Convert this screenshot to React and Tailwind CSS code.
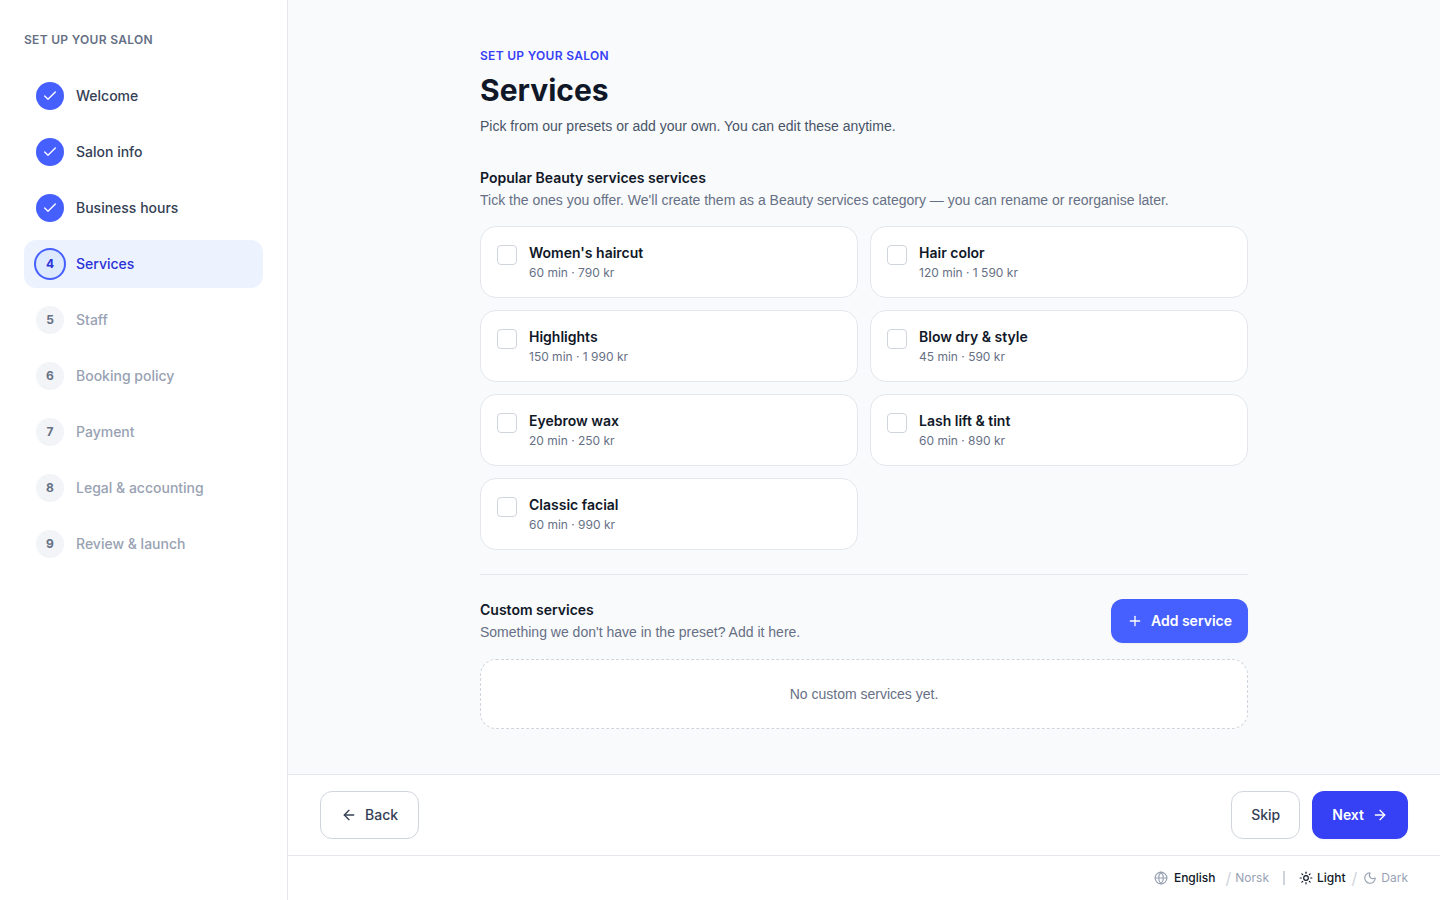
import React, { useState } from "react";
import { ArrowLeft, ArrowRight, Check, Globe, Moon, Plus, Sun } from "lucide-react";

const steps = [
  "Welcome",
  "Salon info",
  "Business hours",
  "Services",
  "Staff",
  "Booking policy",
  "Payment",
  "Legal & accounting",
  "Review & launch",
];

const presets = [
  { id: "womens-haircut", name: "Women's haircut", detail: "60 min · 790 kr" },
  { id: "hair-color", name: "Hair color", detail: "120 min · 1 590 kr" },
  { id: "highlights", name: "Highlights", detail: "150 min · 1 990 kr" },
  { id: "blow-dry", name: "Blow dry & style", detail: "45 min · 590 kr" },
  { id: "eyebrow-wax", name: "Eyebrow wax", detail: "20 min · 250 kr" },
  { id: "lash-lift", name: "Lash lift & tint", detail: "60 min · 890 kr" },
  { id: "classic-facial", name: "Classic facial", detail: "60 min · 990 kr" },
];

// descriptions only, everything else inherits Inter
const bodyText = "font-['Liberation_Sans',Arial,sans-serif] text-sm";

const StepItem = ({ label, number, current }) => {
  const done = number < current;
  const active = number === current;

  let circle = "bg-[#f2f4f7] text-[#667085]";
  let text = "text-[#98a2b3]";
  if (done) {
    circle = "bg-[#465fff] text-white";
    text = "text-[#344054]";
  }
  if (active) {
    circle = "bg-[#dde9ff] text-[#2a31d8] ring-2 ring-[#465fff]";
    text = "text-[#2a31d8]";
  }

  return (
    <li>
      <button
        type="button"
        disabled={!done && !active}
        aria-current={active ? "step" : undefined}
        className={`flex h-12 w-full items-center gap-3 rounded-xl px-3 text-left ${active ? "bg-[#ecf3ff]" : ""}`}
      >
        <span className={`flex size-7 shrink-0 items-center justify-center rounded-full text-xs font-bold ${circle}`}>
          {done ? <Check size={16} /> : number}
        </span>
        <span className={`text-sm font-medium ${text}`}>{label}</span>
      </button>
    </li>
  );
};

const PresetCard = ({ preset, checked, onToggle }) => (
  <label
    htmlFor={preset.id}
    className="flex cursor-pointer items-start gap-3 rounded-2xl border border-[#e4e7ec] bg-white p-4"
  >
    <input
      id={preset.id}
      type="checkbox"
      checked={checked}
      onChange={onToggle}
      className="mt-0.5 size-5 shrink-0 appearance-none rounded border border-[#d0d5dd] bg-white checked:border-[#465fff] checked:bg-[#465fff]"
    />
    <span className="flex flex-col gap-0.5">
      <span className="text-sm font-semibold text-[#101828]">{preset.name}</span>
      <span className="text-xs text-[#667085]">{preset.detail}</span>
    </span>
  </label>
);

const App = () => {
  const [selected, setSelected] = useState([]);

  const toggle = (id) => {
    setSelected((prev) => (prev.includes(id) ? prev.filter((x) => x !== id) : [...prev, id]));
  };

  return (
    <div className="flex min-h-screen bg-[#f9fafb] font-[Inter,sans-serif] text-[#101828]">
      <aside className="w-72 shrink-0 border-r border-[#e4e7ec] bg-white px-6 py-8">
        <h2 className="text-xs font-semibold tracking-wide text-[#667085] uppercase">Set up your salon</h2>
        <ol className="mt-6 flex flex-col gap-2">
          {steps.map((label, i) => (
            <StepItem key={label} label={label} number={i + 1} current={4} />
          ))}
        </ol>
      </aside>

      <div className="flex min-w-0 flex-1 flex-col">
        <main className="mx-auto w-full max-w-3xl flex-1 pt-12 pb-10">
          <p className="text-xs font-semibold tracking-wide text-[#3641f5] uppercase">Set up your salon</p>
          <h1 className="mt-2 text-3xl font-bold">Services</h1>
          <p className={`mt-2 text-[#475467] ${bodyText}`}>
            Pick from our presets or add your own. You can edit these anytime.
          </p>

          <section className="mt-8">
            <h2 className="text-sm font-semibold">Popular Beauty services services</h2>
            <p className={`mt-0.5 text-[#667085] ${bodyText}`}>
              Tick the ones you offer. We'll create them as a Beauty services category — you can rename or reorganise
              later.
            </p>
            <div className="mt-4 grid grid-cols-2 gap-3">
              {presets.map((preset) => (
                <PresetCard
                  key={preset.id}
                  preset={preset}
                  checked={selected.includes(preset.id)}
                  onToggle={() => toggle(preset.id)}
                />
              ))}
            </div>
          </section>

          <section className="mt-6 border-t border-[#e4e7ec] pt-6">
            <div className="flex items-center justify-between">
              <div>
                <h2 className="text-sm font-semibold">Custom services</h2>
                <p className={`mt-0.5 text-[#667085] ${bodyText}`}>
                  Something we don't have in the preset? Add it here.
                </p>
              </div>
              <button
                type="button"
                className="flex h-11 items-center gap-2 rounded-xl bg-[#465fff] px-4 text-sm font-semibold text-white shadow-xs"
              >
                <Plus size={16} />
                Add service
              </button>
            </div>
            <div
              className={`mt-4 rounded-2xl border border-dashed border-[#d0d5dd] bg-white p-6 text-center text-[#667085] ${bodyText}`}
            >
              No custom services yet.
            </div>
          </section>
        </main>

        <div className="flex items-center justify-between border-t border-[#e4e7ec] bg-white px-8 py-4">
          <button
            type="button"
            className="flex h-12 items-center gap-2 rounded-xl border border-[#d0d5dd] bg-white px-5 text-sm font-medium text-[#344054]"
          >
            <ArrowLeft size={16} />
            Back
          </button>
          <div className="flex gap-3">
            <button
              type="button"
              className="h-12 rounded-xl border border-[#d0d5dd] bg-white px-[19px] text-sm font-medium text-[#344054]"
            >
              Skip
            </button>
            <button
              type="button"
              className="flex h-12 items-center gap-2 rounded-xl bg-[#3641f5] px-5 text-sm font-semibold text-white shadow-xs"
            >
              Next
              <ArrowRight size={16} />
            </button>
          </div>
        </div>

        <footer className="flex h-[45px] items-center justify-end border-t border-[#e4e7ec] bg-white px-8 text-xs text-[#98a2b3]">
          <Globe size={14} />
          <button type="button" className="ml-1.5 font-medium text-[#101828]">
            English
          </button>
          <span className="mr-1 ml-2.5 text-base text-[#d0d5dd]">/</span>
          <button type="button">Norsk</button>
          <span className="mx-3.5 h-3.5 w-0.5 bg-[#d0d5dd]" />
          <button type="button" className="flex items-center gap-1 font-medium text-[#101828]">
            <Sun size={14} />
            Light
          </button>
          <span className="mx-1.5 text-base text-[#d0d5dd]">/</span>
          <button type="button" className="flex items-center gap-1">
            <Moon size={14} />
            Dark
          </button>
        </footer>
      </div>
    </div>
  );
};

export default App;
